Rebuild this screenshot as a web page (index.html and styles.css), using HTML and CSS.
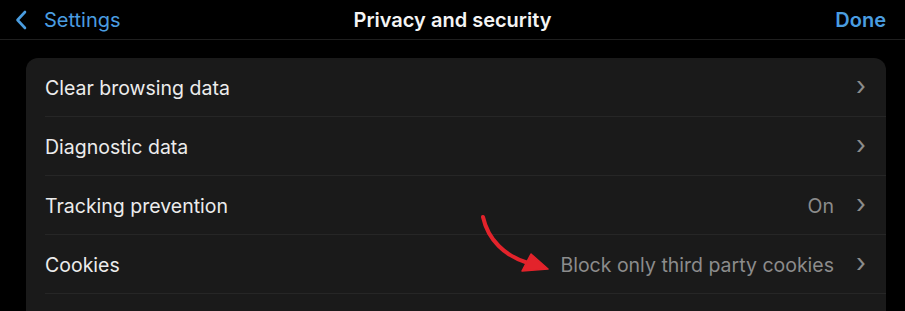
FILE: index.html
```html
<!DOCTYPE html>
<html lang="en">
<head>
  <meta charset="UTF-8">
  <title>Privacy and security</title>
  <link rel="stylesheet" href="styles.css">
</head>
<body>

  <header class="nav">
    <a class="nav-back" href="#">
      <svg width="12" height="20" viewBox="0 0 12 20"><path d="M10 2 L2.5 10 L10 18" fill="none" stroke="currentColor" stroke-width="2.6" stroke-linecap="round" stroke-linejoin="round"/></svg>
      Settings
    </a>
    <h1 class="nav-title">Privacy and security</h1>
    <a class="nav-done" href="#">Done</a>
  </header>

  <div class="content">
    <ul class="group">
      <li class="row">
        <span class="label">Clear browsing data</span>
        <span class="chevron">&#x203A;</span>
      </li>
      <li class="row">
        <span class="label">Diagnostic data</span>
        <span class="chevron">&#x203A;</span>
      </li>
      <li class="row">
        <span class="label">Tracking prevention</span>
        <span class="value">On</span>
        <span class="chevron">&#x203A;</span>
      </li>
      <li class="row">
        <span class="label">Cookies</span>
        <span class="value">Block only third party cookies</span>
        <span class="chevron">&#x203A;</span>
        <!-- annotation arrow -->
        <svg class="arrow" width="80" height="70" viewBox="0 0 80 70">
          <path d="M8 7 C 13 30, 30 46, 53 53" fill="none" stroke="#e3232b" stroke-width="4" stroke-linecap="round"/>
          <path d="M56 44 L73 59 L47 61 Z" fill="#e3232b" stroke="#e3232b" stroke-width="1.5" stroke-linejoin="round"/>
        </svg>
      </li>
      <li class="row"></li>
    </ul>
  </div>

</body>
</html>
```

FILE: styles.css
```css
body {
  margin: 0;
  background-color: #000;
  color: #ececec;
  font-family: Inter, "Liberation Sans", sans-serif;
  overflow: hidden;
}

.nav {
  height: 39px;
  display: flex;
  align-items: center;
  justify-content: space-between;
  padding: 0 19px 0 15px;
  border-bottom: 1px solid #1f1f1f;
  position: relative;
}

.nav a {
  color: #4a9de0;
  text-decoration: none;
  font-size: 20px;
}

.nav-back {
  display: flex;
  align-items: center;
  gap: 17px;
}

.nav-title {
  position: absolute;
  left: 0;
  right: 0;
  text-align: center;
  margin: 0;
  font-size: 20px;
  font-weight: 600;
  color: #f4f4f4;
  pointer-events: none;
}

.nav-done {
  font-weight: 600;
}

.content {
  padding: 18px 19px 0 26px;
}

.group {
  list-style: none;
  margin: 0;
  padding: 0 0 0 19px;
  background-color: #1a1a1a;
  border-radius: 12px;
}

.row {
  height: 57px;
  display: flex;
  align-items: center;
  border-bottom: 1px solid #262626;
  font-size: 19.5px;
  position: relative;
  padding-right: 20px;
  padding-top: 1px;
}

.label {
  flex: 1;
}

.value {
  color: #8c8c8c;
  margin-right: 22px;
}

.chevron {
  color: #8c8c8c;
  font-size: 26px;
  line-height: 1;
  margin-top: -3px;
}

.arrow {
  position: absolute;
  left: 430px;
  top: -25px;
}
```
